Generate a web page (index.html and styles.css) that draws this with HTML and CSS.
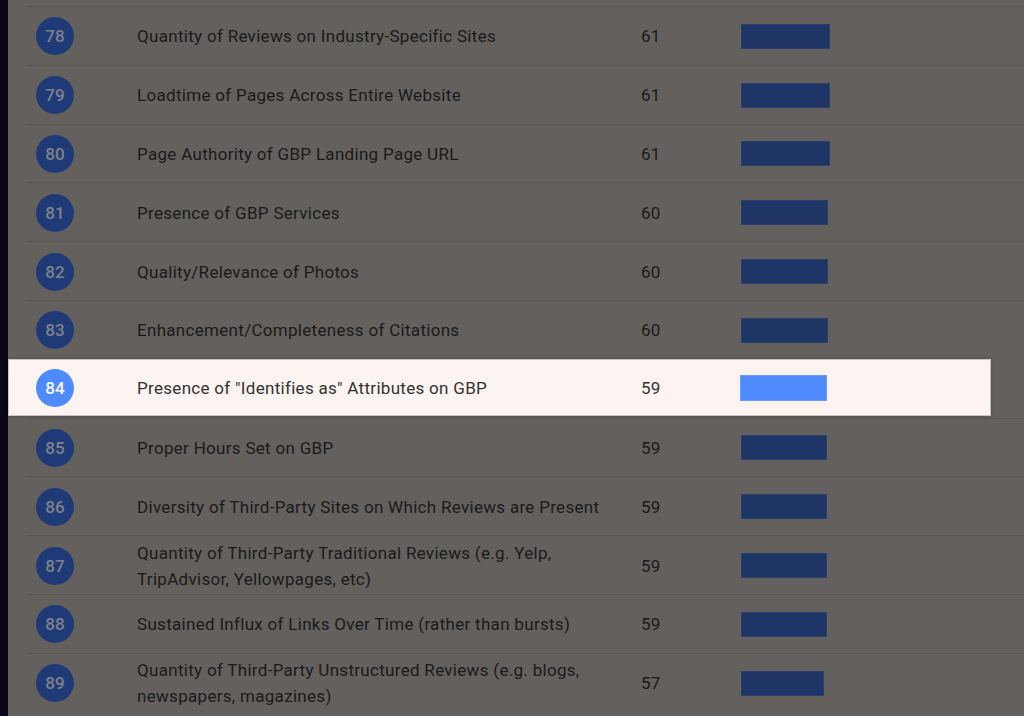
FILE: index.html
```html
<!DOCTYPE html>
<html>
<head>
<meta charset="utf-8">
<link rel="stylesheet" href="styles.css">
</head>
<body>
<div class="page">
  <div class="strip"></div>
  <div class="table">
    <div class="row"><div class="rank"><span class="badge">78</span></div><div class="name">Quantity of Reviews on Industry-Specific Sites</div><div class="score">61</div><div class="barcell"><span class="bar" style="width:89px"></span></div></div>
    <div class="row"><div class="rank"><span class="badge">79</span></div><div class="name">Loadtime of Pages Across Entire Website</div><div class="score">61</div><div class="barcell"><span class="bar" style="width:89px"></span></div></div>
    <div class="row"><div class="rank"><span class="badge">80</span></div><div class="name">Page Authority of GBP Landing Page URL</div><div class="score">61</div><div class="barcell"><span class="bar" style="width:89px"></span></div></div>
    <div class="row"><div class="rank"><span class="badge">81</span></div><div class="name">Presence of GBP Services</div><div class="score">60</div><div class="barcell"><span class="bar" style="width:87px"></span></div></div>
    <div class="row"><div class="rank"><span class="badge">82</span></div><div class="name">Quality/Relevance of Photos</div><div class="score">60</div><div class="barcell"><span class="bar" style="width:87px"></span></div></div>
    <div class="row"><div class="rank"><span class="badge">83</span></div><div class="name">Enhancement/Completeness of Citations</div><div class="score">60</div><div class="barcell"><span class="bar" style="width:87px"></span></div></div>
    <div class="row row-hl"><div class="rank"><span class="badge">84</span></div><div class="name">Presence of "Identifies as" Attributes on GBP</div><div class="score">59</div><div class="barcell"><span class="bar" style="width:87px"></span></div></div>
    <div class="row"><div class="rank"><span class="badge">85</span></div><div class="name">Proper Hours Set on GBP</div><div class="score">59</div><div class="barcell"><span class="bar" style="width:86px"></span></div></div>
    <div class="row"><div class="rank"><span class="badge">86</span></div><div class="name">Diversity of Third-Party Sites on Which Reviews are Present</div><div class="score">59</div><div class="barcell"><span class="bar" style="width:86px"></span></div></div>
    <div class="row"><div class="rank"><span class="badge">87</span></div><div class="name">Quantity of Third-Party Traditional Reviews (e.g. Yelp, TripAdvisor, Yellowpages, etc)</div><div class="score">59</div><div class="barcell"><span class="bar" style="width:86px"></span></div></div>
    <div class="row"><div class="rank"><span class="badge">88</span></div><div class="name">Sustained Influx of Links Over Time (rather than bursts)</div><div class="score">59</div><div class="barcell"><span class="bar" style="width:86px"></span></div></div>
    <div class="row"><div class="rank"><span class="badge">89</span></div><div class="name">Quantity of Third-Party Unstructured Reviews (e.g. blogs, newspapers, magazines)</div><div class="score">57</div><div class="barcell"><span class="bar" style="width:83px"></span></div></div>
  </div>
</div>
</body>
</html>
```

FILE: styles.css
```css
* { box-sizing: border-box; }
html, body {
  margin: 0;
  padding: 0;
  height: 100%;
  overflow: hidden;
}
body {
  background: #63605e;
  font-family: Roboto, "Liberation Sans", sans-serif;
}
.page {
  display: flex;
  height: 716px;
}
.strip {
  width: 8px;
  flex: none;
  background: #0a0616;
}
.table {
  flex: 1;
  padding-top: 6px;
  padding-left: 18px;
}
.row {
  display: grid;
  grid-template-columns: 111px 504px 100px 1fr;
  align-items: center;
  height: 58.8px;
  border-top: 1px solid #5a5756;
  color: #1b1a1a;
  font-size: 17px;
  letter-spacing: 0.3px;
  line-height: 26px;
  padding-top: 1px;
}
.rank {
  padding-left: 10px;
  display: flex;
}
.badge {
  width: 38px;
  height: 38px;
  border-radius: 50%;
  background: #1f3b77;
  color: #80818a;
  font-weight: 500;
  font-size: 17px;
  letter-spacing: 0;
  display: flex;
  align-items: center;
  justify-content: center;
}
.name {
  padding-right: 20px;
}
.barcell {
  display: flex;
}
.bar {
  display: block;
  height: 25px;
  background: #1f3566;
  border: 1px solid #2a3f6c;
}
.row-hl {
  margin-left: -18px;
  padding-left: 17px;
  margin-right: 33px;
  height: 57px;
  margin-bottom: 1.8px;
  background: #fdf3f1;
  border: 1px solid #c8c4c2;
  box-shadow: 0 0 3px rgba(0,0,0,0.25);
  color: #333;
  position: relative;
  z-index: 1;
}
.row-hl .badge {
  background: #4e8bff;
  color: #ffffff;
}
.row-hl .bar {
  background: #4f8aff;
  border-color: #6a9cff;
  height: 26px;
  margin-left: -1px;
}
```
